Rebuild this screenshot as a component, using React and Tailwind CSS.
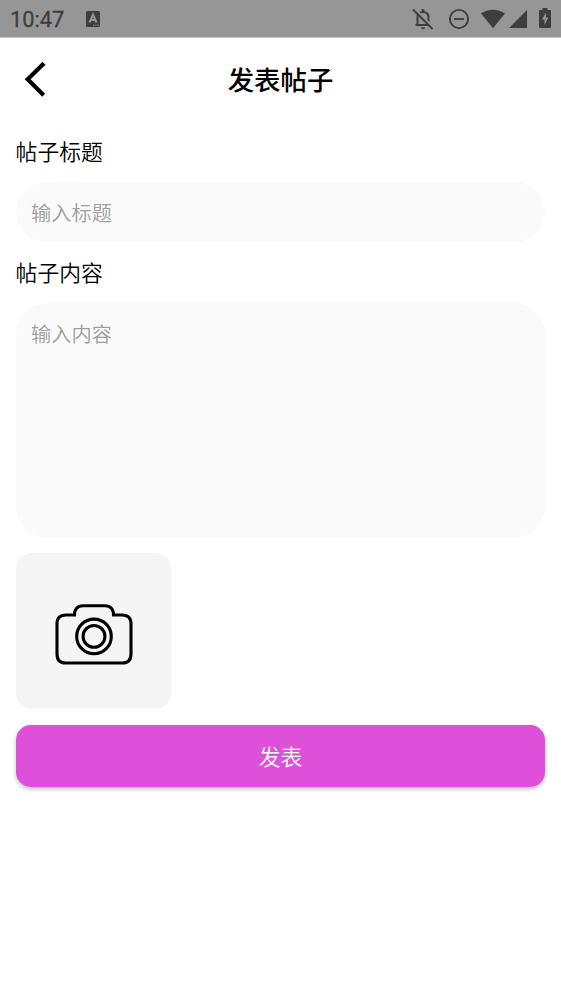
import { useState } from "react";

const StatusBar = () => (
  <div className="flex h-[38px] items-center justify-between border-b border-[#c6c6c6] bg-[#969696] pl-2.5 pr-[10px] text-[#3e3e3e]">
    <div className="flex items-center">
      <span className="w-[75px] font-['Roboto'] text-[21.8px] font-normal leading-none pt-[2px] [-webkit-text-stroke:0.3px_#3e3e3e]">10:47</span>
      <svg className="mt-px" width="16" height="18" viewBox="0 0 16 18">
        <rect x="1" y="1" width="14" height="16" rx="1.5" fill="#3e3e3e" />
        <path d="M4.5 12.5 8 4.5 11.5 12.5M5.8 10h4.4" fill="none" stroke="#969696" strokeWidth="2" />
        <path d="M8 15.2h1.3m1 0h1.3m1 0h1.3" stroke="#969696" strokeWidth="1" />
      </svg>
    </div>
    <div className="flex items-center">
      {/* muted bell */}
      <svg className="mr-[14px]" width="22" height="22" viewBox="0 0 22 22" fill="none" stroke="#3e3e3e" strokeWidth="2">
        <path d="M5.5 17V9.5C5.5 6 7.5 4 11 4s5.5 2 5.5 5.5V17M3.5 17h15" />
        <path d="M11 1.2V4" strokeWidth="2.6" />
        <path d="M9 19.2h4a2 2 0 0 1-4 0z" fill="#3e3e3e" stroke="none" />
        <path d="M2.2.2 22 20" stroke="#969696" />
        <path d="M1 1.5 20.5 21" />
      </svg>
      {/* do not disturb */}
      <svg className="mr-[11px]" width="22" height="22" viewBox="0 0 22 22" fill="none" stroke="#3e3e3e" strokeWidth="1.9">
        <circle cx="11" cy="11" r="9.1" />
        <path d="M6 11h10" />
      </svg>
      <svg className="mr-[4px]" width="24" height="20" viewBox="0 0 24 20" fill="#3e3e3e">
        <path d="M0 4.6C3.4 2 7.4.7 12 .7S20.6 2 24 4.6L12 19.2z" />
      </svg>
      <svg className="mr-[12px]" width="18" height="18" viewBox="0 0 18 18" fill="#3e3e3e">
        <path d="M18 0v18H0z" />
      </svg>
      <svg className="mb-px" width="12" height="20" viewBox="0 0 12 20">
        <path d="M3.5 0h5v2H11q1 0 1 1v16q0 1-1 1H1q-1 0-1-1V3q0-1 1-1h2.5z" fill="#3e3e3e" />
        <path d="M7 4.5 3 11.5h2.5V17L9.3 9.5H7z" fill="#969696" />
      </svg>
    </div>
  </div>
);

const App = () => {
  const [title, setTitle] = useState("");
  const [content, setContent] = useState("");

  return (
    <div className="h-[999px] overflow-hidden bg-white font-['Noto_Sans_CJK_SC',sans-serif] text-black">
      <StatusBar />

      {/* Header */}
      <header className="grid h-[83px] grid-cols-[48px_1fr_48px] items-center px-4 pb-[2px]">
        <button aria-label="返回" className="pl-[8px]">
          <svg width="24" height="36" viewBox="0 0 24 36" fill="none" stroke="#000" strokeWidth="4.2">
            <path d="M20 2.2 3.7 18.2l16 16" />
          </svg>
        </button>
        <h1 className="text-center text-[26.4px] font-medium leading-[38px]">发表帖子</h1>
      </header>

      <main className="flex flex-col px-[15.6px]">
        <label htmlFor="title" className="h-[61px] pt-[14px] text-[21.8px] font-[350] leading-[32px]">帖子标题</label>
        <input
          id="title"
          value={title}
          onChange={(e) => setTitle(e.target.value)}
          placeholder="输入标题"
          className="h-[60px] rounded-[30px] bg-[#fafafa] px-[15.5px] text-[20.2px] font-[350] outline-none placeholder:text-[#9e9e9e]"
        />
        <label htmlFor="content" className="h-[61px] pt-[14px] text-[21.8px] font-[350] leading-[32px]">帖子内容</label>
        <textarea
          id="content"
          value={content}
          onChange={(e) => setContent(e.target.value)}
          placeholder="输入内容"
          className="h-[234.5px] resize-none rounded-[31px] bg-[#fafafa] px-[15.5px] py-[16px] text-[20.2px] font-[350] leading-[30px] outline-none placeholder:text-[#9e9e9e]"
        />

        {/* Photo */}
        <button aria-label="添加图片" className="mt-[15.5px] flex h-[156px] w-[155.6px] items-center justify-center rounded-[16px] bg-[#f5f5f5]">
          <svg className="ml-[2px] mt-[5px]" width="78" height="62" viewBox="0 0 78 62" fill="none" stroke="#000" strokeWidth="3.1">
            <path d="M11 12h8.5C19.5 6 23 2.7 28 2.7h22c5 0 8.5 3.3 8.5 9.3H67q9 0 9 9v30q0 9-9 9H11q-9 0-9-9V21q0-9 9-9z" />
            <circle cx="39" cy="33.4" r="17.3" />
            <circle cx="39" cy="33.4" r="10.9" />
          </svg>
        </button>

        <button className="mt-4 h-[62px] rounded-[15px] bg-[#de50da] pb-px text-[21.8px] font-[350] leading-[32px] text-white shadow-[0_2px_4px_rgba(0,0,0,0.28)]">
          发表
        </button>
      </main>
    </div>
  );
};

export default App;
